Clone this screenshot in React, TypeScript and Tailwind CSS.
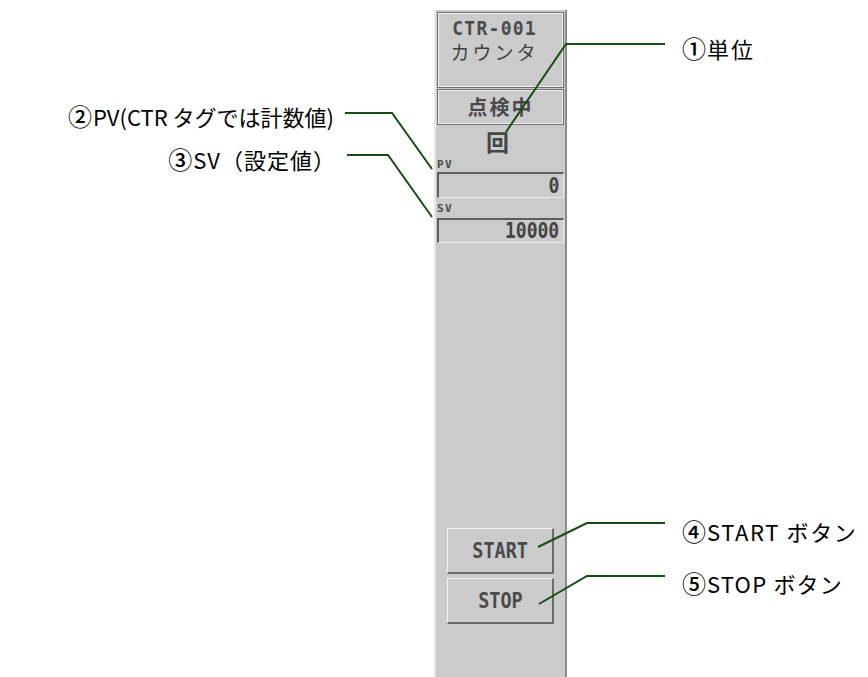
const LINE = "#154d15";

const mono = "font-['DejaVu_Sans_Mono',monospace]";
const jp = "font-['Noto_Sans_CJK_JP','Noto_Sans',sans-serif]";

type Callout = {
  num: string;
  text: string;
  top: number;
  side: "left" | "right";
  edge: number;
  track: string;
};

const CALLOUTS: Callout[] = [
  { num: "①", text: "単位", top: 35, side: "right", edge: 682, track: "tracking-[2px]" },
  { num: "②", text: "PV(CTR タグでは計数値)", top: 103, side: "left", edge: 534, track: "tracking-[0px]" },
  { num: "③", text: "SV（設定値）", top: 146, side: "left", edge: 532, track: "tracking-[1px]" },
  { num: "④", text: "START ボタン", top: 518, side: "right", edge: 682, track: "tracking-[1.6px]" },
  { num: "⑤", text: "STOP ボタン", top: 570, side: "right", edge: 682, track: "tracking-[1.2px]" },
];

// leader lines: horizontal stub + diagonal into the panel
const LEADERS = [
  "M665 44 H566 L506 132",
  "M345 113 H392 L432 169",
  "M347 155 H388 L432 217",
  "M665 523 H587 L538 547",
  "M665 576 H587 L539 604",
];

function ValueField({ value }: { value: string }) {
  return (
    <div className="ml-px w-[127px] h-full border-t-2 border-l-2 border-t-[#5e5e5e] border-l-[#5e5e5e] border-b border-r border-b-[#ececec] border-r-[#ececec] flex items-center justify-end pr-[4px] overflow-hidden">
      <span
        className={`${mono} inline-block origin-right scale-x-[0.82] text-[22px] font-bold leading-none text-[#444444]`}
      >
        {value}
      </span>
    </div>
  );
}

function PanelButton({ label, className = "" }: { label: string; className?: string }) {
  return (
    <div
      className={`ml-[11px] w-[107px] h-[46px] border-t border-l border-t-[#f4f4f4] border-l-[#f4f4f4] border-b-2 border-r-2 border-b-[#6a6a6a] border-r-[#6a6a6a] flex items-center justify-center ${className}`}
    >
      <span
        className={`${mono} inline-block scale-x-[0.84] text-[22px] font-bold leading-none text-[#4a4a4a]`}
      >
        {label}
      </span>
    </div>
  );
}

function CounterPanel() {
  return (
    <div className="ml-[434px] mt-[10px] w-[133px] h-[667px] bg-[#cbcbcb] border-l-2 border-l-[#e6e6e6] border-r-2 border-r-[#8c8c8c] flex flex-col">
      {/* tag name */}
      <div className="mt-[2px] ml-px w-[127px] h-[76px] border border-[#6f6f6f] shadow-[inset_1px_1px_0_#efefef,inset_-1px_-1px_0_#efefef] flex flex-col items-center pt-[3px] pr-[12px]">
        <div className={`${mono} h-[24px] scale-x-[0.95] text-[19px] font-bold leading-[24px] tracking-[1.3px] text-[#4c4c4c]`}>CTR-001</div>
        <div className={`${jp} h-[24px] text-[19px] leading-[24px] tracking-[3px] text-[#404040]`}>カウンタ</div>
      </div>
      {/* status */}
      <div className="mt-px ml-px w-[127px] h-[36px] border border-[#6f6f6f] shadow-[inset_1px_1px_0_#efefef,inset_-1px_-1px_0_#efefef] flex items-center justify-center">
        <span className={`${jp} text-[20px] font-bold leading-none tracking-[2px] text-[#4a4a4a]`}>点検中</span>
      </div>
      {/* unit */}
      <div className="h-[33px] flex items-start justify-center pt-[5px] pr-[6px]">
        <span className={`${jp} text-[23px] font-bold leading-none text-[#454545]`}>回</span>
      </div>
      <div className="h-[14px] flex items-end pl-[1px] pb-[2px]">
        <span className={`${mono} text-[11px] font-black leading-[10px] tracking-[1.5px] text-[#4a4a4a]`}>PV</span>
      </div>
      <div className="h-[26px]">
        <ValueField value="0" />
      </div>
      <div className="h-[20px] flex items-end pl-[1px] pb-[4px]">
        <span className={`${mono} text-[11px] font-black leading-[10px] tracking-[1.5px] text-[#4a4a4a]`}>SV</span>
      </div>
      <div className="h-[25px]">
        <ValueField value="10000" />
      </div>
      <PanelButton label="START" className="mt-[285px]" />
      <PanelButton label="STOP" className="mt-[4px]" />
    </div>
  );
}

export default function App() {
  return (
    <div className={`relative w-[868px] h-[677px] bg-white overflow-hidden ${jp}`}>
      <CounterPanel />

      <svg className="absolute inset-0 pointer-events-none" width="868" height="677">
        {LEADERS.map((d) => (
          <path key={d} d={d} fill="none" stroke={LINE} strokeWidth={2} />
        ))}
      </svg>

      {CALLOUTS.map((c) => (
        <div
          key={c.num}
          className={`absolute h-[26px] flex items-center whitespace-nowrap text-[22px] leading-none text-black ${c.track}`}
          style={c.side === "left" ? { top: c.top, right: c.edge } : { top: c.top, left: c.edge }}
        >
          <span className="text-[24px] font-medium mr-[1px] tracking-normal">{c.num}</span>
          <span>{c.text}</span>
        </div>
      ))}
    </div>
  );
}
